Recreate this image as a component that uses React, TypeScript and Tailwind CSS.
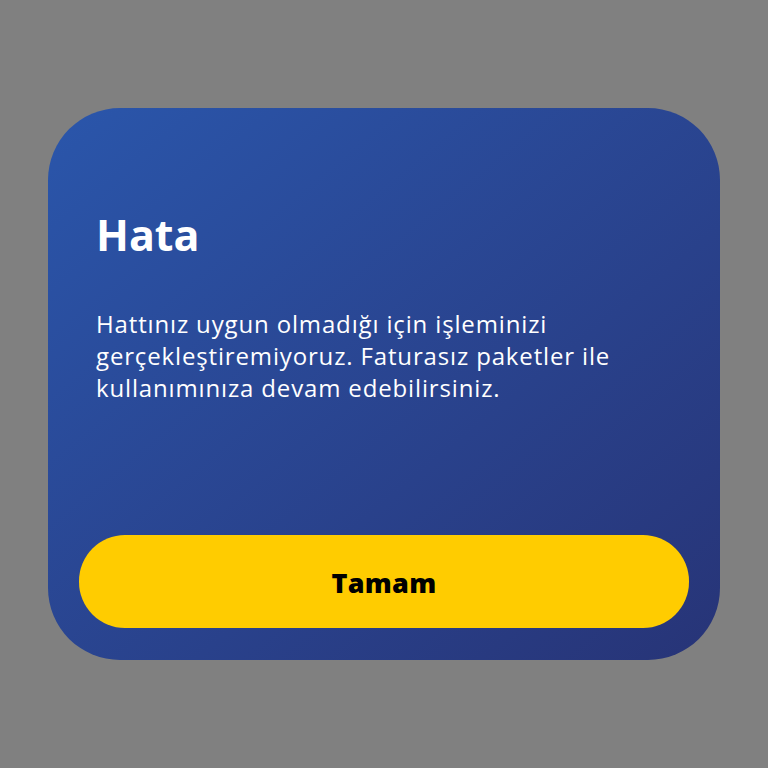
export default function App() {
  return (
    <div
      className="w-[768px] h-[768px] bg-[#808080] pt-[108px] pl-[48px]"
      style={{ fontFamily: "'Open Sans', Lato, sans-serif" }}
    >
      <div className="w-[672px] h-[552px] rounded-[72px] bg-gradient-to-br from-[#2a56ab] to-[#273477] px-[31px] pb-[32px] flex flex-col">
        <div className="px-[17px] pt-[101px]">
          <h1 className="text-[43px] leading-[52px] font-bold text-white">Hata</h1>
          <p className="mt-[47px] text-[24px] leading-[32px] tracking-[0.85px] text-white">
            Hattınız uygun olmadığı için işleminizi
            <br />
            gerçekleştiremiyoruz. Faturasız paketler ile
            <br />
            kullanımınıza devam edebilirsiniz.
          </p>
        </div>
        <button className="mt-auto h-[93px] w-full rounded-[46px] bg-[#ffcc00] pt-[4px] text-black text-[27px] tracking-[0.3px] font-extrabold">
          Tamam
        </button>
      </div>
    </div>
  );
}
